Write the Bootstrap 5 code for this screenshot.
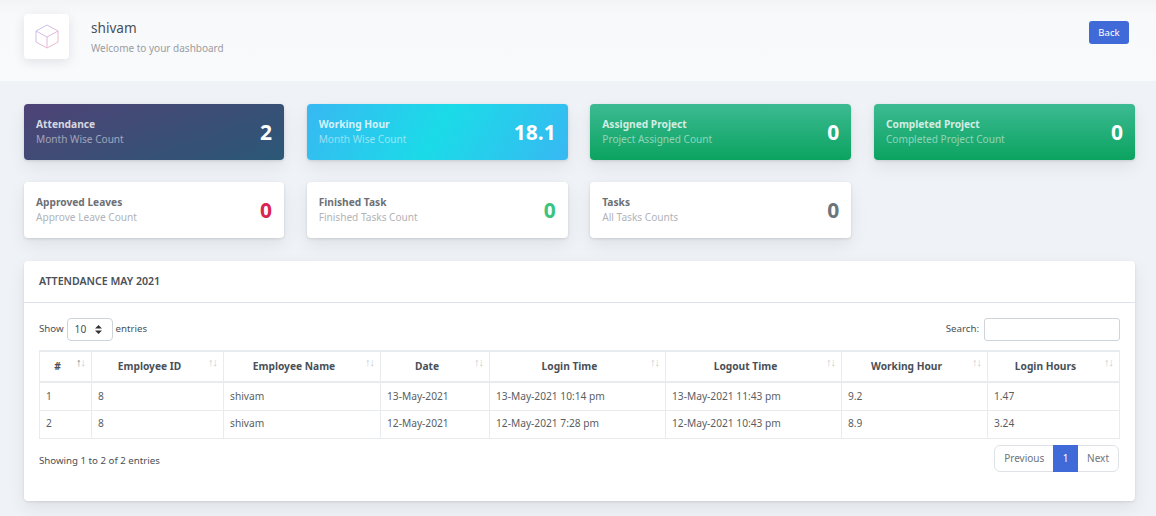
<!DOCTYPE html>
<html lang="en">
<head>
  <meta charset="UTF-8" />
  <title>Dashboard</title>
  <link href="https://cdn.jsdelivr.net/npm/bootstrap@5.3.0/dist/css/bootstrap.min.css" rel="stylesheet" />
  <style>
    body {
      font-family: "Noto Sans", "Open Sans", sans-serif;
      font-size: 9.7px;
      color: #495057;
      background: #eff2f6;
      height: 516px;
      overflow: hidden;
    }

    .title-band {
      height: 81px;
      padding: 14px 27px 0 24px;
      background: linear-gradient(#f3f4f6 0, #f8f9fb 14px, #f9fafc 100%);
    }
    .title-icon {
      width: 45px;
      height: 45px;
      background: #fff;
      border-radius: 4px;
      box-shadow: 0 3px 12px rgba(8, 10, 37, .1);
      margin-right: 22px;
    }
    .title-icon svg { opacity: .75; }
    .title-name { font-size: 13.6px; line-height: 20px; color: #495057; margin-top: 4px; }
    .title-sub { font-size: 10px; line-height: 16px; color: #9a9da1; margin-top: 2px; }
    .back-btn {
      background: #3f6ad8;
      color: #fff;
      font-size: 9.6px;
      line-height: 13px;
      padding: 5px 0;
      width: 40px;
      margin-top: 7px;
      border: 0;
      border-radius: 3px;
    }

    .page-body { padding: 23px 21px 0 24px; }
    .tile-grid {
      grid-template-columns: 260px repeat(3, 261px);
      gap: 22px 22.67px;
    }
    .tile {
      height: 56px;
      padding: 0 12px;
      border-radius: 4px;
      background: #fff;
      box-shadow: 0 7px 18px rgba(4, 9, 20, .07), 0 1px 3px rgba(4, 9, 20, .12);
    }
    .tile-head { font-size: 10.2px; font-weight: 700; line-height: 15px; color: #6c6f75; }
    .tile-sub { font-size: 10.1px; line-height: 15px; color: #b1b3b8; }
    .tile-num { font-size: 21px; font-weight: 700; line-height: 28px; }
    .tile-dark { color: #fff; }
    .tile-dark .tile-head { color: rgba(255, 255, 255, .8); }
    .tile-dark .tile-sub { color: rgba(255, 255, 255, .5); }
    .grad-night { background: linear-gradient(-20deg, #2b5876 0%, #4e4376 100%); }
    .grad-sky { background: linear-gradient(120deg, #38b8f2 0%, #1bdbe8 50%, #38b8f2 100%); }
    .grad-green { background: linear-gradient(#3cba92 0%, #0ba360 100%); }
    .num-red { color: #d92550; }
    .num-green { color: #3ac47d; }
    .num-grey { color: #6c757d; }

    .main-panel {
      height: 240px;
      margin-top: 23px;
      background: #fff;
      border-radius: 4px;
      box-shadow: 0 7px 18px rgba(4, 9, 20, .07), 0 1px 3px rgba(4, 9, 20, .1);
    }
    .panel-title {
      height: 42px;
      padding: 0 15px;
      font-size: 10.6px;
      font-weight: 600;
      color: #495057;
      border-bottom: 1px solid #dee2ee;
      text-transform: uppercase;
    }
    .panel-inner { padding: 15px; }
    .len-pick {
      appearance: none;
      width: 46px;
      height: 23px;
      font-size: 10.2px;
      padding: 1px 0 0 7px;
      margin: 0 3px;
      color: #495057;
      border: 1px solid #ced4da;
      border-radius: 4px;
      background: #fff url("data:image/svg+xml,%3Csvg xmlns='http://www.w3.org/2000/svg' width='7' height='9'%3E%3Cpath fill='%23333' d='M3.500 0 7 3.500H0zM0 5.500h7L3.500 9z'/%3E%3C/svg%3E") no-repeat right 10px center;
    }
    .search-box {
      width: 136px;
      height: 23px;
      margin-left: 5px;
      border: 1px solid #ced4da;
      border-radius: 3px;
      padding: 0;
    }
    .emp-table {
      table-layout: fixed;
      width: 1080px;
      margin: 9px 0 0;
      font-size: 10.2px;
      color: #495057;
      border-collapse: collapse;
    }
    .emp-table th, .emp-table td { border: 1px solid #e9ecef; vertical-align: middle; }
    .emp-table th {
      position: relative;
      height: 31px;
      padding: 0 22px 0 6px;
      text-align: center;
      font-weight: 700;
      font-size: 10.2px;
      border-bottom-width: 2px;
      border-top-width: 2px;
    }
    .emp-table td { height: 28px; padding: 0 6px; color: #595e63; }
    .sort-mark {
      position: absolute;
      top: 4px;
      right: 6px;
      font-size: 11px;
      font-weight: 400;
      line-height: 11px;
      letter-spacing: -1px;
      color: #c9ccd0;
    }
    .sort-mark b { font-weight: 400; color: #4d8a8a; }
    .info-text { margin-top: 15px; }
    .pager { margin: 6px 1px 0 0; }
    .pager .page-link {
      font-size: 10px;
      line-height: 15px;
      padding: 5px 9px;
      color: #6c757d;
      border-color: #dee2e6;
    }
    .pager .page-item.active .page-link { background: #3f6ad8; border-color: #3f6ad8; color: #fff; padding: 5px 8.5px; }
  </style>
</head>
<body>
  <div class="title-band d-flex justify-content-between align-items-start">
    <div class="d-flex">
      <div class="title-icon d-flex align-items-center justify-content-center">
        <svg width="24" height="25" viewBox="0 0 24 25" fill="none" stroke-width="1">
          <defs>
            <linearGradient id="cubeLine" gradientUnits="userSpaceOnUse" x1="1" y1="1" x2="23" y2="24">
              <stop offset="0" stop-color="#a9aaf6" />
              <stop offset="1" stop-color="#f99db0" />
            </linearGradient>
          </defs>
          <path stroke="url(#cubeLine)" d="M12 1 23 7v11l-11 6-11-6V7ZM1 7l11 6 11-6M12 13v11" />
        </svg>
      </div>
      <div>
        <div class="title-name">shivam</div>
        <div class="title-sub">Welcome to your dashboard</div>
      </div>
    </div>
    <button type="button" class="btn back-btn">Back</button>
  </div>

  <div class="page-body">
    <div class="d-grid tile-grid">
      <div class="tile tile-dark grad-night d-flex justify-content-between align-items-center">
        <div><div class="tile-head">Attendance</div><div class="tile-sub">Month Wise Count</div></div>
        <div class="tile-num">2</div>
      </div>
      <div class="tile tile-dark grad-sky d-flex justify-content-between align-items-center">
        <div><div class="tile-head">Working Hour</div><div class="tile-sub">Month Wise Count</div></div>
        <div class="tile-num">18.1</div>
      </div>
      <div class="tile tile-dark grad-green d-flex justify-content-between align-items-center">
        <div><div class="tile-head">Assigned Project</div><div class="tile-sub">Project Assigned Count</div></div>
        <div class="tile-num">0</div>
      </div>
      <div class="tile tile-dark grad-green d-flex justify-content-between align-items-center">
        <div><div class="tile-head">Completed Project</div><div class="tile-sub">Completed Project Count</div></div>
        <div class="tile-num">0</div>
      </div>
      <div class="tile d-flex justify-content-between align-items-center">
        <div><div class="tile-head">Approved Leaves</div><div class="tile-sub">Approve Leave Count</div></div>
        <div class="tile-num num-red">0</div>
      </div>
      <div class="tile d-flex justify-content-between align-items-center">
        <div><div class="tile-head">Finished Task</div><div class="tile-sub">Finished Tasks Count</div></div>
        <div class="tile-num num-green">0</div>
      </div>
      <div class="tile d-flex justify-content-between align-items-center">
        <div><div class="tile-head">Tasks</div><div class="tile-sub">All Tasks Counts</div></div>
        <div class="tile-num num-grey">0</div>
      </div>
    </div>

    <div class="main-panel">
      <div class="panel-title d-flex align-items-center">Attendance May 2021</div>
      <div class="panel-inner">
        <div class="d-flex justify-content-between align-items-center">
          <label class="d-flex align-items-center">Show
            <select class="len-pick"><option>10</option></select>
            entries</label>
          <label class="d-flex align-items-center">Search:<input type="search" class="search-box" /></label>
        </div>
        <table class="emp-table">
          <colgroup>
            <col style="width:52px" /><col style="width:132px" /><col style="width:157px" /><col style="width:109px" />
            <col style="width:176px" /><col style="width:176px" /><col style="width:146px" /><col style="width:132px" />
          </colgroup>
          <thead>
            <tr>
              <th># <span class="sort-mark"><b>↑</b>↓</span></th>
              <th>Employee ID <span class="sort-mark">↑↓</span></th>
              <th>Employee Name <span class="sort-mark">↑↓</span></th>
              <th>Date <span class="sort-mark">↑↓</span></th>
              <th>Login Time <span class="sort-mark">↑↓</span></th>
              <th>Logout Time <span class="sort-mark">↑↓</span></th>
              <th>Working Hour <span class="sort-mark">↑↓</span></th>
              <th>Login Hours <span class="sort-mark">↑↓</span></th>
            </tr>
          </thead>
          <tbody>
            <tr>
              <td>1</td><td>8</td><td>shivam</td><td>13-May-2021</td>
              <td>13-May-2021 10:14 pm</td><td>13-May-2021 11:43 pm</td><td>9.2</td><td>1.47</td>
            </tr>
            <tr>
              <td>2</td><td>8</td><td>shivam</td><td>12-May-2021</td>
              <td>12-May-2021 7:28 pm</td><td>12-May-2021 10:43 pm</td><td>8.9</td><td>3.24</td>
            </tr>
          </tbody>
        </table>
        <div class="d-flex justify-content-between align-items-start">
          <div class="info-text">Showing 1 to 2 of 2 entries</div>
          <ul class="pagination pager">
            <li class="page-item"><a class="page-link" href="#">Previous</a></li>
            <li class="page-item active"><a class="page-link" href="#">1</a></li>
            <li class="page-item"><a class="page-link" href="#">Next</a></li>
          </ul>
        </div>
      </div>
    </div>
  </div>
  <script src="https://cdn.jsdelivr.net/npm/bootstrap@5.3.0/dist/js/bootstrap.bundle.min.js"></script>
</body>
</html>
